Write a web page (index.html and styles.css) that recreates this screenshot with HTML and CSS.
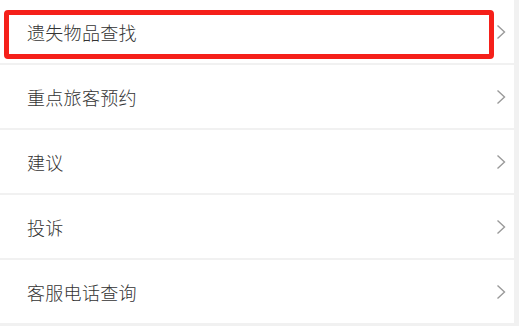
FILE: index.html
```html
<!DOCTYPE html>
<html lang="zh">
<head>
<meta charset="utf-8">
<link rel="stylesheet" href="styles.css">
</head>
<body>
<div class="list">
  <div class="row">
    <span class="label">遗失物品查找</span>
    <svg class="chev" viewBox="0 0 10 16"><path d="M1.5 1.5 L8.5 8 L1.5 14.5" /></svg>
    <div class="highlight"></div>
  </div>
  <div class="row">
    <span class="label">重点旅客预约</span>
    <svg class="chev" viewBox="0 0 10 16"><path d="M1.5 1.5 L8.5 8 L1.5 14.5" /></svg>
  </div>
  <div class="row">
    <span class="label">建议</span>
    <svg class="chev" viewBox="0 0 10 16"><path d="M1.5 1.5 L8.5 8 L1.5 14.5" /></svg>
  </div>
  <div class="row">
    <span class="label">投诉</span>
    <svg class="chev" viewBox="0 0 10 16"><path d="M1.5 1.5 L8.5 8 L1.5 14.5" /></svg>
  </div>
  <div class="row">
    <span class="label">客服电话查询</span>
    <svg class="chev" viewBox="0 0 10 16"><path d="M1.5 1.5 L8.5 8 L1.5 14.5" /></svg>
  </div>
</div>
</body>
</html>
```

FILE: styles.css
```css
html, body {
  margin: 0;
  padding: 0;
  background: #f1f1f1;
  font-family: "Noto Sans CJK SC", "Liberation Sans", sans-serif;
}
.list {
  display: flex;
  flex-direction: column;
  gap: 2px;
  width: 514px;
}
.row {
  position: relative;
  height: 63px;
  background: #ffffff;
  display: flex;
  align-items: center;
  justify-content: space-between;
  padding: 0 8px 0 27px;
}
.label {
  font-size: 18px;
  font-weight: 300;
  color: #333333;
  letter-spacing: 0.3px;
}
.chev {
  width: 10px;
  height: 16px;
  fill: none;
  stroke: #9a9a9a;
  stroke-width: 1.4;
}
.highlight {
  position: absolute;
  left: 4px;
  top: 10px;
  width: 480px;
  height: 39px;
  border: 5px solid #f5201a;
  border-radius: 4px;
}
```
